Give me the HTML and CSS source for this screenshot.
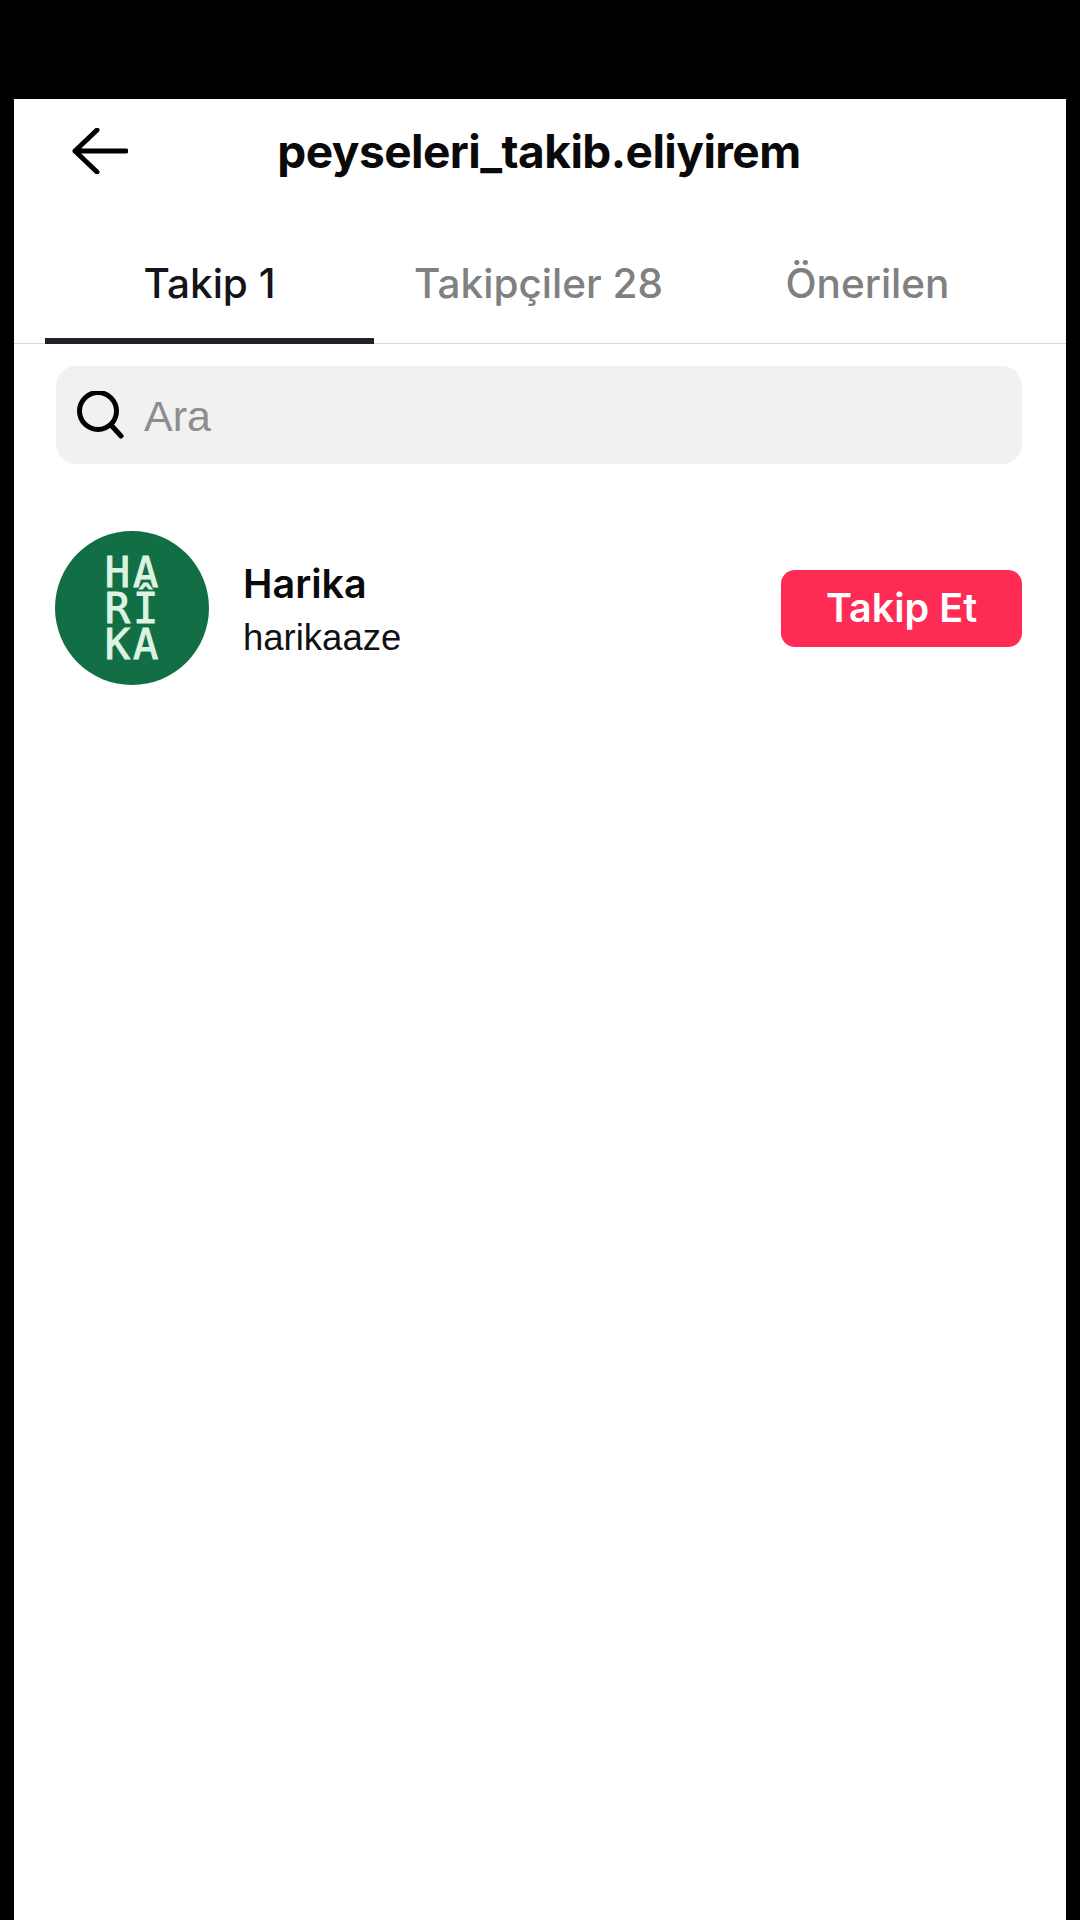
FILE: index.html
```html
<!DOCTYPE html>
<html lang="tr">
<head>
<meta charset="utf-8">
<title>peyseleri_takib.eliyirem</title>
<link rel="stylesheet" href="styles.css">
</head>
<body>
<main class="screen">
  <header class="topbar">
    <svg class="back" viewBox="0 0 56 46" aria-hidden="true"><path d="M54 23H3M25 2 3 23l22 21"/></svg>
    <h1 class="title">peyseleri_takib.eliyirem</h1>
  </header>
  <nav class="tabs">
    <div class="tab active">Takip 1</div>
    <div class="tab">Takipçiler 28</div>
    <div class="tab">Önerilen</div>
  </nav>
  <div class="search">
    <svg class="search-icon" viewBox="0 0 48 48" aria-hidden="true"><circle cx="22" cy="20" r="18.5"/><path d="M35 34l10 11"/></svg>
    <span class="placeholder">Ara</span>
  </div>
  <section class="row">
    <svg class="avatar" viewBox="0 0 154 154" role="img" aria-label="Harika">
      <circle class="avatar-bg" cx="77" cy="77" r="77"/>
      <text class="logo" x="78" y="56">HA</text>
      <text class="logo" x="78" y="92">RÎ</text>
      <text class="logo" x="78" y="128">KA</text>
    </svg>
    <div class="info">
      <div class="name">Harika</div>
      <div class="handle">harikaaze</div>
    </div>
    <button class="follow">Takip Et</button>
  </section>
</main>
</body>
</html>
```
FILE: styles.css
```css
* { box-sizing: border-box; }
html, body { margin: 0; height: 1920px; background: #000; }
body { padding: 99px 14px 0; font-family: "Inter", "Liberation Sans", sans-serif; overflow: hidden; }
.screen { background: #fff; height: 1821px; }

.topbar { position: relative; height: 103px; display: flex; align-items: center; justify-content: center; padding-right: 2px; }
.back { position: absolute; left: 58px; top: 29px; width: 56px; height: 46px; fill: none; stroke: #000; stroke-width: 5; stroke-linecap: round; stroke-linejoin: round; }
.title { margin: 0; font-size: 46px; font-weight: 700; color: #0a0a0a; letter-spacing: -0.55px; }

.tabs { display: flex; padding: 0 31px; height: 142px; border-bottom: 1px solid #d8d8da; }
.tab { width: 329px; display: flex; align-items: center; justify-content: center; padding-top: 26px; font-size: 40.5px; font-weight: 500; color: #808080; margin-bottom: -1px; border-bottom: 6px solid transparent; }
.tab.active { color: #14141a; border-bottom-color: #20222a; }

.search { margin: 22px 44px 0 42px; height: 98px; display: flex; align-items: center; background: #f1f1f2; border-radius: 20px; padding: 0 20px; gap: 20px; }
.search-icon { width: 48px; height: 48px; fill: none; stroke: #000; stroke-width: 5; stroke-linecap: round; }
.placeholder { font-family: "Liberation Sans", sans-serif; font-size: 43px; color: #8d8d8d; padding-top: 3px; }

.row { margin-top: 67px; padding: 0 44px 0 41px; display: flex; align-items: center; }
.avatar { width: 154px; height: 154px; flex: none; }
.avatar-bg { fill: #126f45; }
.logo { fill: #dcf3e2; stroke: #dcf3e2; stroke-width: 1; font-family: "DejaVu Sans Mono", monospace; font-size: 42px; letter-spacing: 3px; text-anchor: middle; }
.info { margin-left: 34px; flex: 1; padding-top: 3px; }
.name { font-size: 39.5px; font-weight: 600; color: #0a0a0a; line-height: 50px; }
.handle { font-family: "Liberation Sans", sans-serif; font-size: 36.5px; color: #111; line-height: 44px; margin-top: 7px; }
.follow { width: 241px; height: 77px; border: 0; border-radius: 14px; background: #fe2c55; color: #fff; font-family: inherit; font-size: 39.5px; font-weight: 600; }
```
